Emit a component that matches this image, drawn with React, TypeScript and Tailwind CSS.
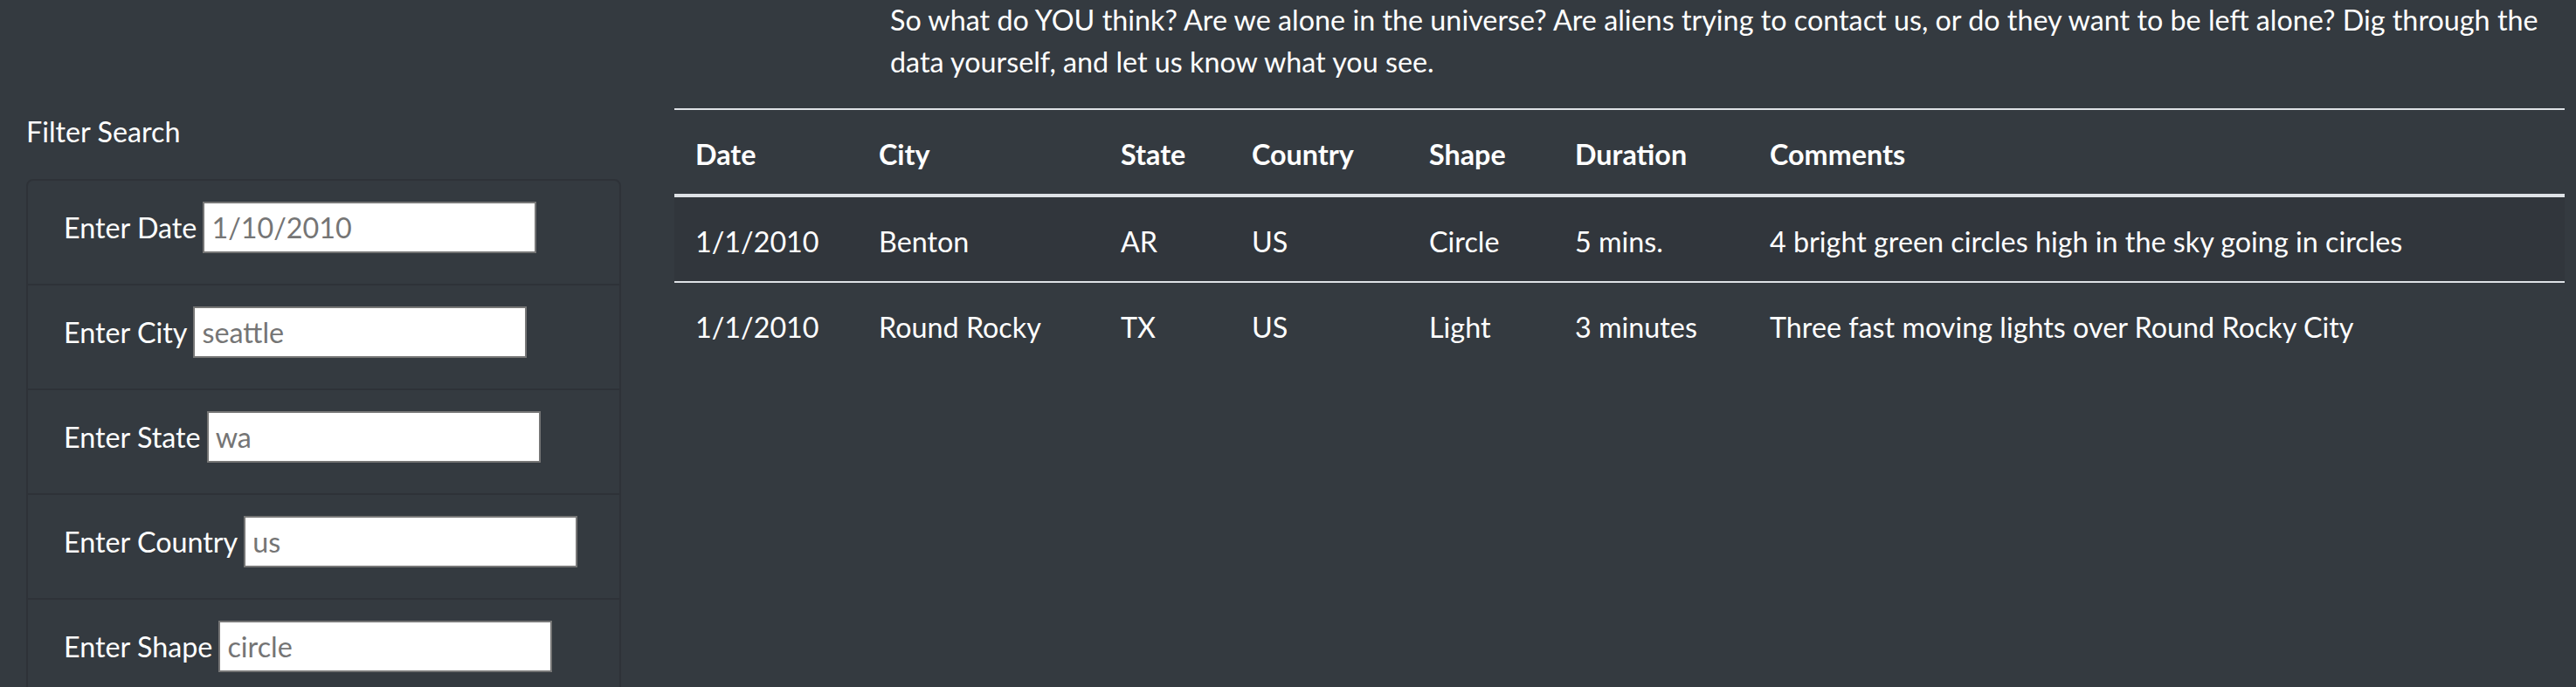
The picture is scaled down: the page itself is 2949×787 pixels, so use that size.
const filters = [
  { label: "Enter Date", placeholder: "1/10/2010" },
  { label: "Enter City", placeholder: "seattle" },
  { label: "Enter State", placeholder: "wa" },
  { label: "Enter Country", placeholder: "us" },
  { label: "Enter Shape", placeholder: "circle" },
];

const columns = [
  { name: "Date", width: "w-[210px]" },
  { name: "City", width: "w-[277px]" },
  { name: "State", width: "w-[150px]" },
  { name: "Country", width: "w-[203px]" },
  { name: "Shape", width: "w-[167px]" },
  { name: "Duration", width: "w-[223px]" },
  { name: "Comments", width: "" },
];

const sightings = [
  ["1/1/2010", "Benton", "AR", "US", "Circle", "5 mins.", "4 bright green circles high in the sky going in circles"],
  ["1/1/2010", "Round Rocky", "TX", "US", "Light", "3 minutes", "Three fast moving lights over Round Rocky City"],
];

export default function App() {
  return (
    <div className="min-h-screen overflow-hidden bg-[#343a40] font-['Lato',sans-serif] text-[32.3px] leading-[48px] text-white">
      <div className="flex">
        {/* filters */}
        <aside className="w-[741px] shrink-0 px-[30px] pt-[127px]">
          <p className="mb-[30px]">Filter Search</p>
          <ul className="rounded-[8px] border-2 border-[#2e3238]">
            {filters.map((f) => (
              <li key={f.label} className="flex h-[120px] items-baseline border-b-2 border-[#2e3238] px-[41px] pt-[24px] last:border-b-0">
                <label>{f.label}</label>
                <input
                  type="text"
                  placeholder={f.placeholder}
                  className="ml-[7px] h-[59px] w-[382px] border-2 border-[#767676] bg-white pl-[8px] text-[32.3px] text-[#333] placeholder:text-[#757575] focus:outline-none"
                />
              </li>
            ))}
          </ul>
        </aside>

        {/* results */}
        <main className="flex-1 pl-[31px] pr-[13px]">
          <p className="-mt-[1px] mb-[29px] ml-[247px]">
            So what do YOU think? Are we alone in the universe? Are aliens trying to contact us, or do they want to be left alone? Dig through the
            <br />
            data yourself, and let us know what you see.
          </p>
          <table className="w-full table-fixed border-collapse">
            <thead>
              <tr>
                {columns.map((c) => (
                  <th
                    key={c.name}
                    className={`${c.width} border-t-2 border-b-4 border-[#dee2e6] px-[24px] pt-[27px] pb-[21px] text-left font-bold`}
                  >
                    {c.name}
                  </th>
                ))}
              </tr>
            </thead>
            <tbody>
              {sightings.map((row, i) => (
                <tr key={i} className="odd:bg-[#31363c]">
                  {row.map((cell, j) => (
                    <td key={j} className="border-t-2 border-[#dee2e6] px-[24px] pt-[27px] pb-[21px]">
                      {cell}
                    </td>
                  ))}
                </tr>
              ))}
            </tbody>
          </table>
        </main>
      </div>
    </div>
  );
}
